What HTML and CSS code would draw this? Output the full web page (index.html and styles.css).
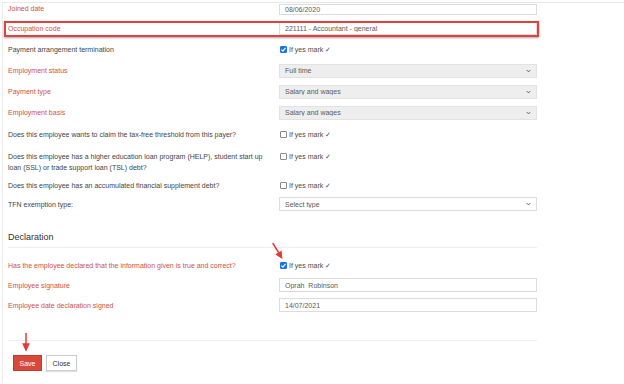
FILE: index.html
```html
<!DOCTYPE html>
<html lang="en">
  <head>
    <meta charset="UTF-8" />
    <meta name="viewport" content="width=device-width, initial-scale=1.0" />
    <title>Employee details</title>
    <link rel="stylesheet" href="styles.css">
  </head>
  <body>
    <div class="panel">
      <form class="form">
        <div class="row row-first">
          <label class="lbl req">Joined date</label>
          <div class="field"><input class="text" value="08/06/2020"></div>
        </div>
        <div class="row row-hl">
          <label class="lbl req">Occupation code</label>
          <div class="field"><input class="text" value="221111 - Accountant - general"></div>
        </div>
        <div class="row">
          <label class="lbl">Payment arrangement termination</label>
          <div class="field">
            <span class="check"><span class="box on"><svg viewBox="0 0 7 7"><path d="M1.4 3.6 L2.9 5.1 L5.6 1.8"/></svg></span>If yes mark ✓</span>
          </div>
        </div>
        <div class="row">
          <label class="lbl req">Employment status</label>
          <div class="field">
            <select class="sel"><option>Full time</option></select>
            <svg class="chev" viewBox="0 0 6 4"><path d="M1 1 L3 3 L5 1"/></svg>
          </div>
        </div>
        <div class="row">
          <label class="lbl req">Payment type</label>
          <div class="field">
            <select class="sel"><option>Salary and wages</option></select>
            <svg class="chev" viewBox="0 0 6 4"><path d="M1 1 L3 3 L5 1"/></svg>
          </div>
        </div>
        <div class="row">
          <label class="lbl req">Employment basis</label>
          <div class="field">
            <select class="sel"><option>Salary and wages</option></select>
            <svg class="chev" viewBox="0 0 6 4"><path d="M1 1 L3 3 L5 1"/></svg>
          </div>
        </div>
        <div class="row row-q1">
          <label class="lbl">Does this employee wants to claim the tax-free threshold from this payer?</label>
          <div class="field"><span class="check"><span class="box"></span>If yes mark ✓</span></div>
        </div>
        <div class="row row-tall">
          <label class="lbl">Does this employee has a higher education loan program (HELP), student start up loan (SSL) or trade support loan (TSL) debt?</label>
          <div class="field"><span class="check"><span class="box"></span>If yes mark ✓</span></div>
        </div>
        <div class="row row-q3">
          <label class="lbl">Does this employee has an accumulated financial supplement debt?</label>
          <div class="field"><span class="check"><span class="box"></span>If yes mark ✓</span></div>
        </div>
        <div class="row row-tfn">
          <label class="lbl">TFN exemption type:</label>
          <div class="field">
            <select class="sel plain"><option>Select type</option></select>
            <svg class="chev" viewBox="0 0 6 4"><path d="M1 1 L3 3 L5 1"/></svg>
          </div>
        </div>

        <h2 class="section-title">Declaration</h2>

        <div class="decl">
          <div class="row">
            <label class="lbl req">Has the employee declared that the information given is true and correct?</label>
            <div class="field">
              <span class="check"><span class="box on"><svg viewBox="0 0 7 7"><path d="M1.4 3.6 L2.9 5.1 L5.6 1.8"/></svg></span>If yes mark ✓</span>
            </div>
          </div>
          <div class="row">
            <label class="lbl req">Employee signature</label>
            <div class="field"><input class="text" value="Oprah  Robinson"></div>
          </div>
          <div class="row">
            <label class="lbl req">Employee date declaration signed</label>
            <div class="field"><input class="text" value="14/07/2021"></div>
          </div>
        </div>

        <div class="actions">
          <button type="button" class="btn btn-save">Save</button>
          <button type="button" class="btn btn-close">Close</button>
        </div>
      </form>
    </div>

    <!-- annotation arrows -->
    <svg class="arrow arrow-check" viewBox="0 0 20 24">
      <line x1="6.7" y1="5" x2="12.9" y2="15.2"/>
      <polygon points="10.8,16.5 15,13.9 15.5,19.5"/>
    </svg>
    <svg class="arrow arrow-save" viewBox="0 0 8 22">
      <line x1="4" y1="2" x2="4" y2="14"/>
      <polygon points="1.3,13 6.7,13 4,19"/>
    </svg>
  </body>
</html>
```

FILE: styles.css
```css
/* Base */
body {
  margin: 0;
  background: #fff;
  font-family: "Liberation Sans", Arial, sans-serif;
  font-size: 7px;
  color: #444;
}

/* Panel frame */
.panel {
  margin: 2px 0 0 2px;
  border-top: 1px solid #e8e8e8;
  border-left: 1px solid #ececec;
  padding-left: 5px;
  height: 381px;
  box-sizing: border-box;
}

.form {
  width: 529px;
}

/* Form rows */
.row {
  display: flex;
  align-items: center;
  height: 21px;
}

.lbl {
  width: 271px;
  flex: none;
  padding-right: 8px;
  box-sizing: border-box;
  line-height: 11px;
}

.req {
  color: #d14f47;
}

.field {
  position: relative;
  width: 258px;
}

.row-first {
  height: 15px;
  align-items: flex-start;
}

.row-first .text {
  height: 11px;
  margin-top: 1px;
}

.row-hl {
  position: relative;
}

.row-hl .text {
  height: 13px;
}

.row-hl::after {
  content: "";
  position: absolute;
  left: -4px;
  right: -2px;
  top: 3px;
  bottom: 2px;
  border: 2px solid #e2403f;
  box-shadow: 0 1px 2px rgba(0, 0, 0, 0.35);
  pointer-events: none;
}

.row-q1 {
  height: 23px;
}

.row-tall {
  height: 29px;
  align-items: flex-start;
  padding-top: 5px;
  box-sizing: border-box;
}

.row-q3 {
  height: 20px;
}

.row-tfn {
  height: 18px;
}

/* Inputs */
.text,
.sel {
  display: block;
  box-sizing: border-box;
  width: 258px;
  height: 14px;
  margin: 0;
  padding: 0 5px;
  border: 1px solid #dcdcdc;
  border-radius: 0;
  background: #fff;
  font-family: inherit;
  font-size: 7px;
  color: #5a5a5a;
  outline: none;
}

.sel {
  appearance: none;
  -webkit-appearance: none;
  background: #eee;
  border-color: #e2e2e2;
}

.sel.plain {
  background: #fff;
  border-color: #dcdcdc;
}

.chev {
  position: absolute;
  right: 6px;
  top: 5px;
  width: 5px;
  height: 4px;
  fill: none;
  stroke: #555;
  stroke-width: 1.2;
  pointer-events: none;
}

/* Checkbox */
.check {
  display: flex;
  align-items: center;
  gap: 2px;
  line-height: 11px;
  color: #4a4a4a;
}

.box {
  display: block;
  width: 7px;
  height: 7px;
  margin-left: 1px;
  box-sizing: border-box;
  border: 1px solid #888;
  border-radius: 1px;
  background: #fff;
}

.box.on {
  background: #1a73e8;
  border-color: #1a73e8;
}

.box svg {
  display: block;
  width: 7px;
  height: 7px;
  margin: -1px;
  fill: none;
  stroke: #fff;
  stroke-width: 1.1;
}

/* Declaration */
.section-title {
  margin: 19px 0 0;
  padding-bottom: 4px;
  border-bottom: 1px solid #eee;
  font-size: 9px;
  line-height: 11px;
  font-weight: normal;
  color: #333;
}

.decl {
  padding-top: 7px;
}

.decl .row {
  height: 20px;
}

/* Footer buttons */
.actions {
  display: flex;
  gap: 4px;
  margin-top: 25px;
  padding: 14px 0 0 5px;
  border-top: 1px solid #eee;
}

.btn {
  height: 16px;
  padding: 0;
  border: 1px solid #ccc;
  font-family: inherit;
  font-size: 7px;
}

.btn-save {
  width: 29px;
  background: #d9493a;
  border-color: #c03b2e;
  color: #fff;
}

.btn-close {
  width: 31px;
  background: #fff;
  color: #333;
  box-shadow: 0 1px 1px rgba(0, 0, 0, 0.12);
}

/* Annotation arrows */
.arrow {
  position: absolute;
  stroke: #e53935;
  stroke-width: 1.5;
  fill: #e53935;
}

.arrow-check {
  left: 266px;
  top: 238px;
  width: 20px;
  height: 24px;
}

.arrow-save {
  left: 22px;
  top: 331px;
  width: 8px;
  height: 22px;
}
```
